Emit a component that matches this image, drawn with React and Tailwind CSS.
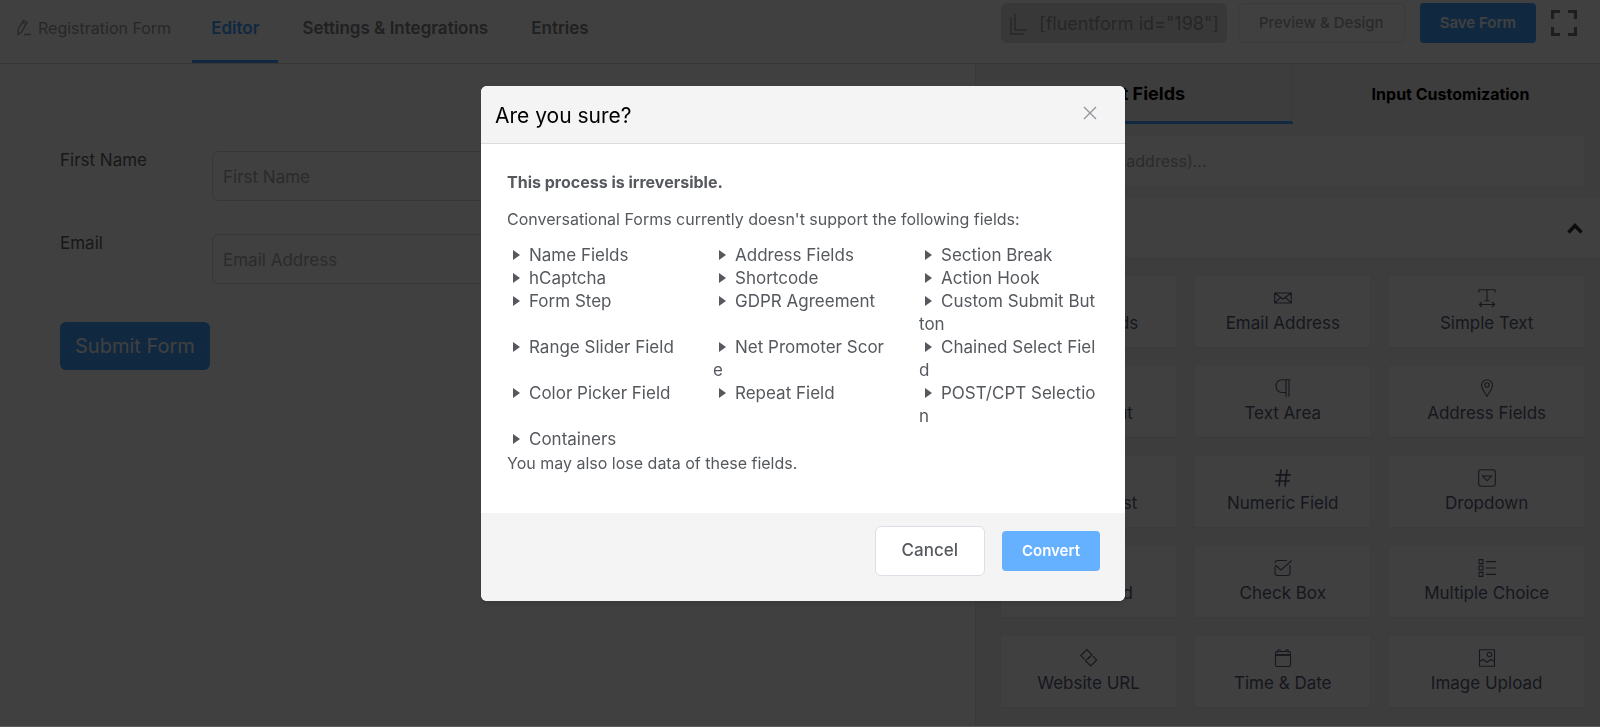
import clsx from "clsx";

const tabs = ["Editor", "Settings & Integrations", "Entries"];

const formFields = [
  { id: "first-name", label: "First Name", type: "text", placeholder: "First Name" },
  { id: "email", label: "Email", type: "email", placeholder: "Email Address" },
];

const unsupportedFields = [
  "Name Fields",
  "Address Fields",
  "Section Break",
  "hCaptcha",
  "Shortcode",
  "Action Hook",
  "Form Step",
  "GDPR Agreement",
  "Custom Submit Button",
  "Range Slider Field",
  "Net Promoter Score",
  "Chained Select Field",
  "Color Picker Field",
  "Repeat Field",
  "POST/CPT Selection",
  "Containers",
];

const icons = {
  user: <path d="M9 9a3.5 3.5 0 1 0 0-7 3.5 3.5 0 0 0 0 7ZM2 17c0-4 3-6 7-6s7 2 7 6" />,
  mail: <path d="M.7 4h16.600v10H.7ZM.7 4 9 10l8.300-6M.7 14l6-5.600M17.300 14l-6-5.600" />,
  text: <path d="M1 3.500V.7h16v2.800M9 .7v11M6.500 11.700h5M1.500 15.500h15M4 13l-2.700 2.500L4 18M14 13l2.700 2.500L14 18" />,
  mask: <path d="M1 4h16v10H1ZM4 7v4" />,
  paragraph: <path d="M16.500 .7H8a6 6 0 0 0-6 6.500 6 6 0 0 0 6 6.300h3.500M12 .7v17M15 .7v17" />,
  pin: (
    <>
      <path d="M9 17.300C6 12.500 3.500 9.500 3.500 6.300a5.500 5.500 0 0 1 11 0c0 3.200-2.500 6.200-5.500 11Z" />
      <circle cx="9" cy="6" r="2.200" />
    </>
  ),
  flag: <path d="M3 17V1h12l-3 4 3 4H3" />,
  hash: <path strokeWidth="1.700" d="M7 .5 5 17.500M13 .5l-2 17M1.800 5.800h15M1 12h15" />,
  dropdown: (
    <>
      <rect x=".7" y=".7" width="16.600" height="16.600" rx="2.500" />
      <path d="M4.500 7h9L9 11.800Z" />
    </>
  ),
  radio: <circle cx="9" cy="9" r="7" />,
  check: <path d="M13 1.500H3.500A2.500 2.500 0 0 0 1 4M1 7v7a2.500 2.500 0 0 0 2.500 2.500h10A2.500 2.500 0 0 0 16 14V6M1.500 6l5.500 5L17.700 1.500" />,
  list: <path d="M1 .6h4v4H1ZM1 7h4v4H1ZM1 13.400h4v4H1ZM8 2.600h10M8 9h10M8 15.400h10" />,
  link: <path d="M4.600 10.300.8 6.500l6-5.900L12 5.800l-4 4M12.900 7.200l3.800 3.800-6 5.900-5.200-5.200 4-4" />,
  calendar: (
    <>
      <path d="M4 2.500H3A1.500 1.500 0 0 0 1.500 4v12A1.500 1.500 0 0 0 3 17.500h12a1.500 1.500 0 0 0 1.500-1.500V4A1.500 1.500 0 0 0 15 2.500h-1M4 4V1h2v1.500h6V1h2v3" />
      <path strokeWidth="1.800" d="M1.500 6h15" />
    </>
  ),
  image: (
    <>
      <path d="M1.500 .7h15v16.600h-15ZM1.500 12.500 5 10.500l4 2.800 4-2.800 3.500 2" />
      <circle cx="11.500" cy="5.500" r="2.200" />
    </>
  ),
};

const inputFields = [
  { label: "Name Fields", icon: "user" },
  { label: "Email Address", icon: "mail" },
  { label: "Simple Text", icon: "text" },
  { label: "Mask Input", icon: "mask" },
  { label: "Text Area", icon: "paragraph" },
  { label: "Address Fields", icon: "pin" },
  { label: "Country List", icon: "flag" },
  { label: "Numeric Field", icon: "hash" },
  { label: "Dropdown", icon: "dropdown" },
  { label: "Radio Field", icon: "radio" },
  { label: "Check Box", icon: "check" },
  { label: "Multiple Choice", icon: "list" },
  { label: "Website URL", icon: "link" },
  { label: "Time & Date", icon: "calendar" },
  { label: "Image Upload", icon: "image" },
];

function FieldIcon({ name }) {
  return (
    <svg
      viewBox="0 0 18 18"
      className="size-[18px] overflow-visible"
      fill="none"
      stroke="currentColor"
      strokeWidth="1.1"
      aria-hidden="true"
    >
      {icons[name]}
    </svg>
  );
}

function TopBar() {
  return (
    <header className="flex h-16 items-start border-b border-[#dcdcde] bg-white">
      <div className="flex h-14 items-center gap-1.5 pl-4 text-base text-[#9a9c9f]">
        <svg viewBox="0 0 16 18" className="h-[18px] w-4" fill="none" stroke="currentColor" strokeWidth="1.3" aria-hidden="true">
          <path d="M2 10.500 7.500 1.500l3.500 2-5.500 9.500L2 15.500ZM6.500 3.500l3.500 2M8 15.500h7" />
        </svg>
        <span>Registration Form</span>
      </div>
      <nav className="ml-[21px] flex gap-[5px] text-[17px] font-semibold">
        {tabs.map((tab, index) => (
          <a
            key={tab}
            href={`#tab-${index}`}
            className={clsx(
              "h-[63px] border-b-3 px-[19px] pt-4 leading-6",
              index === 0 ? "border-[#409eff] text-[#409eff]" : "border-transparent text-[#808286]"
            )}
          >
            {tab}
          </a>
        ))}
      </nav>
      <div className="ml-auto flex items-center pt-[3px] pr-[22px]">
        <button
          type="button"
          className="mr-[11px] flex h-10 items-center gap-2.5 rounded-md bg-[#e0e0e0] px-2 pt-0.5 text-lg text-[#999999]"
        >
          <svg viewBox="0 0 20 22" className="h-[22px] w-5" fill="none" stroke="currentColor" strokeWidth="1.4" aria-hidden="true">
            <path d="M6 1v16h12M2 4v17h13" />
          </svg>
          [fluentform id="198"]
        </button>
        <button
          type="button"
          className="mr-[15px] h-10 rounded-sm border border-[#e8e9ec] px-5 text-[15px] font-medium text-[#a6a6a8]"
        >
          Preview &amp; Design
        </button>
        <button type="button" className="mr-[14px] h-10 rounded-sm bg-[#409eff] px-5 text-[15px] font-semibold text-white">
          Save Form
        </button>
        <button type="button" aria-label="Full screen" className="text-[#777777]">
          <svg viewBox="0 0 28 28" className="size-7" fill="none" stroke="currentColor" strokeWidth="3" aria-hidden="true">
            <path d="M2.500 10V2.500H10M18 2.500h7.500V10M25.500 18v7.500H18M10 25.500H2.500V18" />
          </svg>
        </button>
      </div>
    </header>
  );
}

function FormPreview() {
  return (
    <form className="grow bg-white px-[60px] pt-[87px]">
      {formFields.map((field) => (
        <div key={field.id} className="mb-[33px] flex items-start">
          <label htmlFor={field.id} className="w-[152px] shrink-0 text-[17px] leading-[18px] text-[#606266]">
            {field.label}
          </label>
          <input
            id={field.id}
            type={field.type}
            placeholder={field.placeholder}
            className="h-[50px] grow rounded-md border border-[#d8dae0] px-[10px] pt-0.5 text-[17px] placeholder:text-[#a8abb2]"
          />
        </div>
      ))}
      <button type="button" className="mt-[5px] h-12 rounded-md bg-[#409eff] px-[15px] text-xl text-white">
        Submit Form
      </button>
    </form>
  );
}

function FieldPanel() {
  return (
    <aside className="w-[625px] shrink-0 border-l border-[#e4e4e4] bg-[#f1f1f1]">
      <div className="flex h-[60px]">
        <button
          type="button"
          className="w-[317px] border-r border-b-3 border-r-[#e4e4e4] border-b-[#409eff] pt-0.5 text-lg font-bold"
        >
          Input Fields
        </button>
        <button type="button" className="grow border-b-3 border-transparent pt-0.5 pl-2 text-base font-bold">
          Input Customization
        </button>
      </div>
      <div className="py-3 pr-4 pl-[25px]">
        <input
          type="text"
          aria-label="Search fields"
          placeholder="Search (name, address)..."
          className="h-[50px] w-full bg-white px-[11px] text-base placeholder:text-[#a8abb2]"
        />
      </div>
      <button
        type="button"
        className="flex h-[59px] w-full items-center justify-between bg-white pt-0.5 pr-[17px] pl-[25px] text-base font-semibold text-[#303133]"
      >
        General Fields
        <svg viewBox="0 0 16 11" className="h-[11px] w-4" fill="none" stroke="currentColor" strokeWidth="3.4" aria-hidden="true">
          <path d="m1.500 9.500 6.500-7 6.500 7" />
        </svg>
      </button>
      <div className="grid grid-cols-[9fr_9fr_10fr] gap-[19px] pt-[19px] pr-4 pb-5 pl-[25px]">
        {inputFields.map((field) => (
          <button
            key={field.label}
            type="button"
            className="flex h-[71px] flex-col items-center gap-1 bg-white pt-[13px] text-[17px] leading-6 text-[#5a5d78] shadow-xs"
          >
            <FieldIcon name={field.icon} />
            {field.label}
          </button>
        ))}
      </div>
    </aside>
  );
}

function ConfirmDialog() {
  return (
    <div className="fixed inset-0 flex items-start justify-center border-b border-[#5c5c5c] bg-black/75 pt-[86px] pl-1.5">
      <section
        role="dialog"
        aria-modal="true"
        aria-labelledby="confirm-title"
        className="w-[644px] overflow-hidden rounded-md bg-white text-base text-[#55585d] shadow-md"
      >
        <div className="flex h-[58px] items-center justify-between border-b border-[#dcdcdc] bg-[#f4f4f4] pr-7 pl-3.5">
          <h2 id="confirm-title" className="pt-0.5 text-[21px] text-black">
            Are you sure?
          </h2>
          <button type="button" aria-label="Close" className="mb-1 text-[#909399]">
            <svg viewBox="0 0 14 14" className="size-[14px]" fill="none" stroke="currentColor" strokeWidth="1.300" aria-hidden="true">
              <path d="m1 1 12 12M13 1 1 13" />
            </svg>
          </button>
        </div>
        <div className="h-[369px] pt-[26px] pr-[25px] pl-[26px]">
          <p className="leading-6">
            <strong className="font-bold">This process is irreversible.</strong>
          </p>
          <p className="mt-[13px] leading-6">
            Conversational Forms currently doesn't support the following fields:
          </p>
          <ul className="mt-[13px] grid grid-cols-3 gap-x-[25px] text-[17px] leading-[23px]">
            {unsupportedFields.map((name) => (
              <li key={name} className="pr-[3px] break-all">
                <svg viewBox="0 0 7 10" className="mr-[9px] mb-[3px] ml-[6px] inline-block h-2.5 w-[7px]" fill="currentColor" aria-hidden="true">
                  <path d="M0 0v10l7-5Z" />
                </svg>
                {name}
              </li>
            ))}
          </ul>
          <p className="leading-6">You may also lose data of these fields.</p>
        </div>
        <div className="flex h-[88px] items-start justify-end gap-[17px] bg-[#f4f4f4] pt-[13px] pr-[25px]">
          <button type="button" className="h-[50px] rounded-md border border-[#dcdfe6] bg-white px-[26px] text-[17px] font-medium">
            Cancel
          </button>
          <button type="button" className="mt-[5px] h-10 rounded-sm bg-[#66b1ff] px-5 text-[15px] font-semibold text-white">
            Convert
          </button>
        </div>
      </section>
    </div>
  );
}

export default function App() {
  return (
    <div className="flex h-screen flex-col overflow-hidden font-['Inter',sans-serif]">
      <TopBar />
      <main className="flex grow">
        <FormPreview />
        <FieldPanel />
      </main>
      <ConfirmDialog />
    </div>
  );
}
